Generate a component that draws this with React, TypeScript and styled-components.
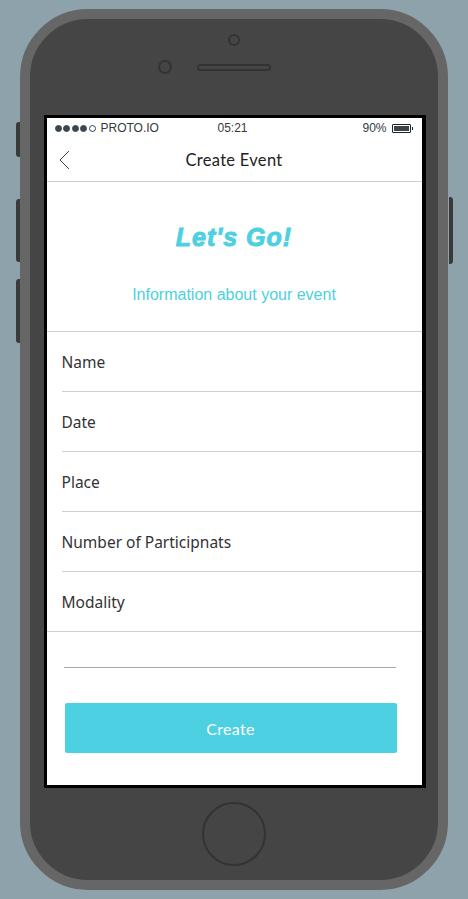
import React from "react";
import styled, { createGlobalStyle } from "styled-components";

const Global = createGlobalStyle`
  html, body { margin: 0; padding: 0; }
  body { background: #8ea2ab; font-family: "Liberation Sans", Arial, sans-serif; }
`;

const Page = styled.div`
  width: 468px;
  height: 899px;
  padding-top: 9px;
  box-sizing: border-box;
  display: flex;
  justify-content: center;
  align-items: flex-start;
  overflow: hidden;
`;

const Phone = styled.div`
  position: relative;
  width: 428px;
  height: 881px;
  box-sizing: border-box;
  border: 10px solid #666666;
  border-radius: 68px;
  background: #454545;
  display: flex;
  flex-direction: column;
  align-items: center;
`;

const SideButton = styled.div<{ $side: "left" | "right"; $top: number; $h: number }>`
  position: absolute;
  top: ${(p) => p.$top}px;
  height: ${(p) => p.$h}px;
  width: 4px;
  background: #3a3a3a;
  ${(p) => (p.$side === "left" ? "left: -14px; border-radius: 3px 0 0 3px;" : "right: -15px; border-radius: 0 3px 3px 0;")}
`;

const TopArea = styled.div`
  width: 100%;
  height: 96px;
  display: flex;
  flex-direction: column;
  align-items: center;
  padding-top: 15px;
  box-sizing: border-box;
`;

const CameraDot = styled.div`
  width: 8px;
  height: 8px;
  border-radius: 50%;
  border: 2px solid #333;
`;

const SensorRow = styled.div`
  display: flex;
  align-items: center;
  margin-top: 14px;
  margin-left: -39px;
  gap: 25px;
`;

const FrontCam = styled.div`
  width: 10px;
  height: 10px;
  border-radius: 50%;
  border: 2px solid #333;
`;

const Speaker = styled.div`
  width: 70px;
  height: 3px;
  border-radius: 4px;
  border: 2px solid #333;
`;

const Screen = styled.div`
  width: 375px;
  height: 667px;
  border: 3px solid #000;
  border-right-width: 4px;
  background: #fff;
  display: flex;
  flex-direction: column;
  margin-left: 1px;
`;

const StatusBar = styled.div`
  height: 20px;
  display: grid;
  grid-template-columns: 1fr auto 1fr;
  align-items: center;
  padding: 0 11px 0 8px;
  font-size: 12px;
  color: #333a40;
`;

const Carrier = styled.div`
  display: flex;
  align-items: center;
  gap: 5px;
`;

const Dots = styled.div`
  display: flex;
  gap: 1.5px;
`;

const Dot = styled.span<{ $empty?: boolean }>`
  width: 7px;
  height: 7px;
  border-radius: 50%;
  box-sizing: border-box;
  background: ${(p) => (p.$empty ? "transparent" : "#3b4650")};
  border: 1px solid #3b4650;
`;

const Time = styled.div`
  text-align: center;
`;

const Battery = styled.div`
  display: flex;
  justify-content: flex-end;
  align-items: center;
  gap: 5px;
`;

const BatteryBody = styled.div`
  position: relative;
  width: 15px;
  height: 5px;
  border: 1px solid #222;
  padding: 1px;
  border-radius: 1px;
  &::before {
    content: "";
    display: block;
    width: 100%;
    height: 100%;
    background: #39444d;
  }
  &::after {
    content: "";
    position: absolute;
    right: -3px;
    top: 2px;
    width: 1px;
    height: 3px;
    background: #222;
  }
`;

const NavBar = styled.div`
  height: 43px;
  border-bottom: 1px solid #cfcfcf;
  display: grid;
  grid-template-columns: 60px 1fr 60px;
  align-items: center;
`;

const Back = styled.div`
  padding-left: 12px;
  display: flex;
  align-items: center;
`;

const NavTitle = styled.div`
  text-align: center;
  font-family: "Lato", "Open Sans", sans-serif;
  font-size: 16.5px;
  color: #222;
  letter-spacing: 0.3px;
`;

const Hero = styled.div`
  height: 149px;
  border-bottom: 1px solid #cfcfcf;
  display: flex;
  flex-direction: column;
  align-items: center;
  color: #4dd0e1;
`;

const HeroTitle = styled.h1`
  margin: 40px 0 0;
  font-family: "Liberation Sans", Arial, sans-serif;
  font-weight: 900;
  font-style: italic;
  font-size: 25px;
  line-height: 30px;
  letter-spacing: 1px;
  -webkit-text-stroke: 0.9px #4dd0e1;
`;

const HeroSub = styled.p`
  margin: 33px 0 0;
  font-size: 16px;
  line-height: 20px;
`;

const List = styled.div`
  display: flex;
  flex-direction: column;
`;

const Row = styled.div<{ $last?: boolean }>`
  margin-left: ${(p) => (p.$last ? "0" : "15px")};
  padding-left: ${(p) => (p.$last ? "15px" : "0")};
  height: 60px;
  display: flex;
  align-items: center;
  border-bottom: 1px solid #cfcfcf;
  font-family: "Noto Sans", "Open Sans", sans-serif;
  font-size: 15.5px;
  color: #333;
  box-sizing: border-box;
`;

const FormFoot = styled.div`
  padding-left: 17px;
  display: flex;
  flex-direction: column;
`;

const InputLine = styled.div`
  width: 332px;
  height: 1px;
  background: #a8a8a8;
  margin-top: 35px;
`;

const CreateButton = styled.button`
  margin-top: 35px;
  margin-left: 1px;
  width: 332px;
  height: 50px;
  border: none;
  border-radius: 2px;
  background: #4dd0e1;
  color: #fff;
  font-family: "Lato", "Open Sans", sans-serif;
  font-size: 16px;
  letter-spacing: 0.3px;
`;

const BottomArea = styled.div`
  flex: 1;
  display: flex;
  align-items: center;
  justify-content: center;
`;

const HomeButton = styled.div`
  width: 60px;
  height: 60px;
  border-radius: 50%;
  border: 2px solid #333;
`;

const fields = ["Name", "Date", "Place", "Number of Participnats", "Modality"];

export default function App() {
  return (
    <Page>
      <Global />
      <Phone>
        <SideButton $side="left" $top={103} $h={35} />
        <SideButton $side="left" $top={180} $h={63} />
        <SideButton $side="left" $top={260} $h={64} />
        <SideButton $side="right" $top={178} $h={67} />
        <TopArea>
          <CameraDot />
          <SensorRow>
            <FrontCam />
            <Speaker />
          </SensorRow>
        </TopArea>
        <Screen>
          <StatusBar>
            <Carrier>
              <Dots>
                <Dot />
                <Dot />
                <Dot />
                <Dot />
                <Dot $empty />
              </Dots>
              <span>PROTO.IO</span>
            </Carrier>
            <Time>05:21</Time>
            <Battery>
              <span>90%</span>
              <BatteryBody />
            </Battery>
          </StatusBar>
          <NavBar>
            <Back>
              <svg width="12" height="20" viewBox="0 0 12 20">
                <polyline points="10,1 1,10 10,19" fill="none" stroke="#444" strokeWidth="1" />
              </svg>
            </Back>
            <NavTitle>Create Event</NavTitle>
            <div />
          </NavBar>
          <Hero>
            <HeroTitle>Let's Go!</HeroTitle>
            <HeroSub>Information about your event</HeroSub>
          </Hero>
          <List>
            {fields.map((f, i) => (
              <Row key={f} $last={i === fields.length - 1}>
                {f}
              </Row>
            ))}
          </List>
          <FormFoot>
            <InputLine />
            <CreateButton>Create</CreateButton>
          </FormFoot>
        </Screen>
        <BottomArea>
          <HomeButton />
        </BottomArea>
      </Phone>
    </Page>
  );
}
